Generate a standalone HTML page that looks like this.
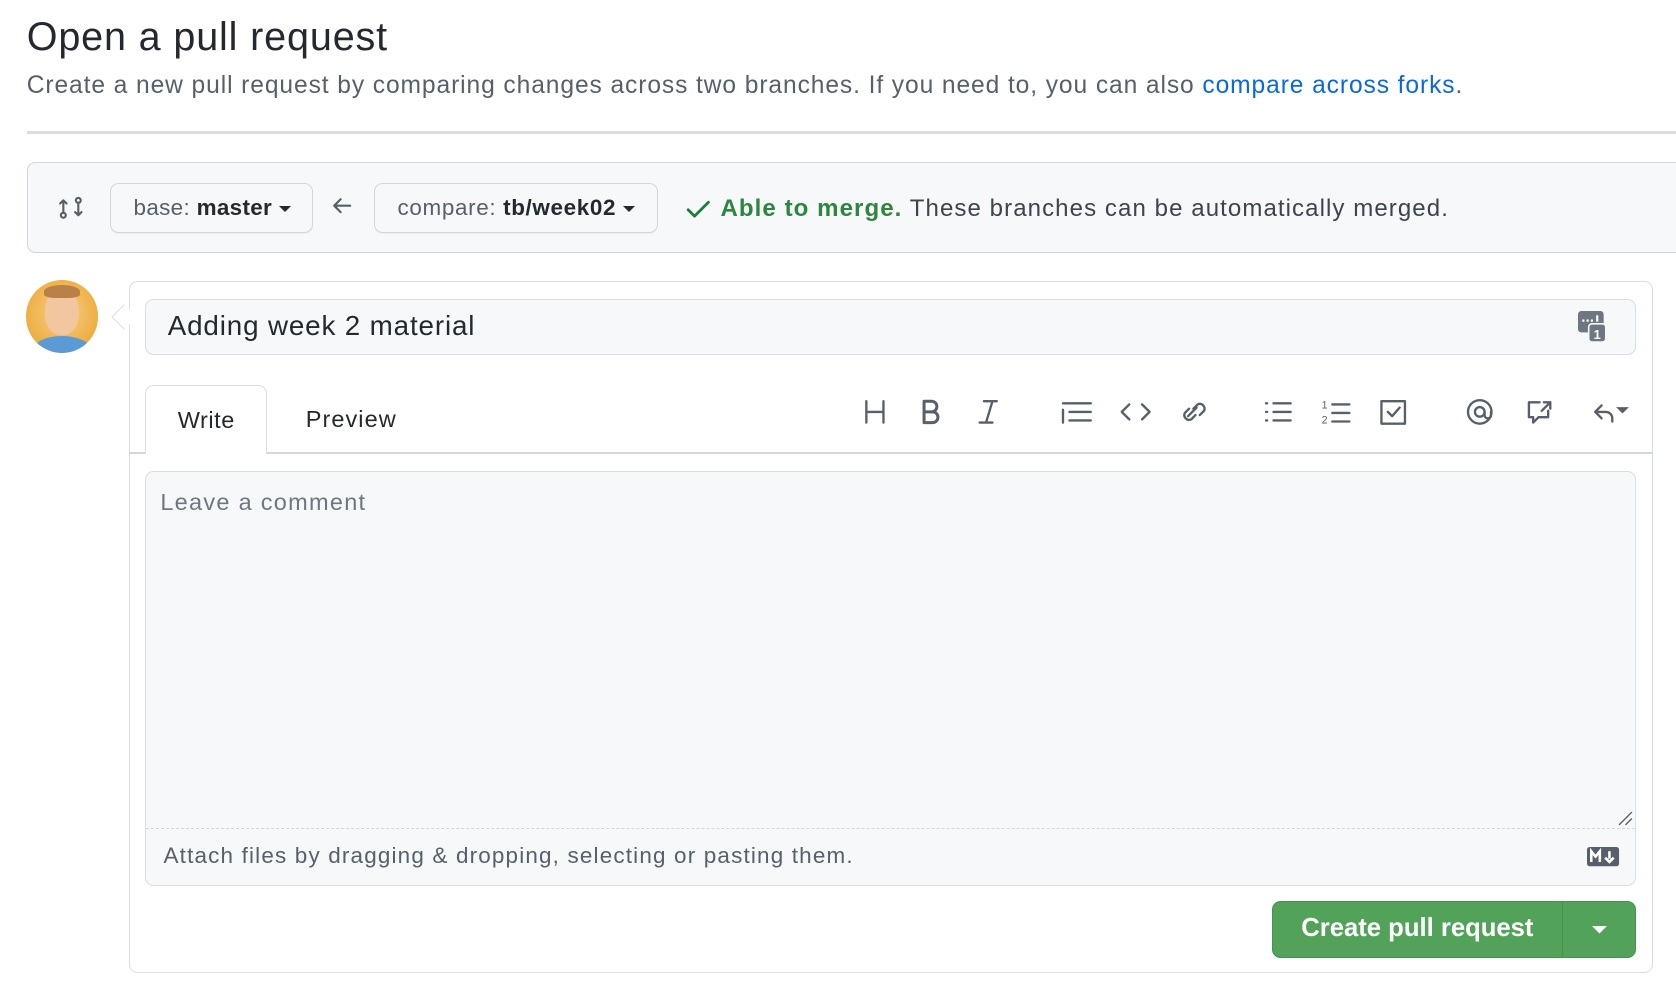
<!DOCTYPE html>
<html><head><meta charset="utf-8"><style>
html,body{margin:0;padding:0;background:#fff;overflow:hidden;width:1676px;height:996px}
#w{zoom:1.0689;position:relative;width:1568px;height:932px;font-family:"Liberation Sans",sans-serif;color:#24292f}
.a{position:absolute}
svg{position:absolute;overflow:visible}
.btn{position:absolute;background:#f6f8fa;border:1.5px solid #d0d7de;border-radius:8px;box-sizing:border-box;font-size:21px;color:#57606a;line-height:44px;padding-left:21px;box-shadow:0 1px 0 rgba(27,31,36,.04);letter-spacing:0.3px}
.btn b{color:#24292f;font-weight:600}
.car{display:inline-block;width:0;height:0;border-left:6px solid transparent;border-right:6px solid transparent;border-top:6px solid #24292f;vertical-align:middle;margin-left:6px}
</style></head><body><div id="w">
<div class="a" style="left:25px;top:12px;font-size:37px;line-height:46px;letter-spacing:0.8px">Open a pull request</div>
<div class="a" style="left:25px;top:66px;font-size:23px;line-height:28px;color:#57606a;letter-spacing:0.85px;white-space:nowrap">Create a new pull request by comparing changes across two branches. If you need to, you can also <span style="color:#0969da">compare across forks</span>.</div>
<div class="a" style="left:25px;top:123px;width:1543px;height:2px;background:#d8dee4"></div>

<div class="a" style="left:25px;top:152px;width:1560px;height:85px;box-sizing:border-box;background:#f6f8fa;border:1.5px solid #d0d7de;border-radius:8px"></div>
<svg style="left:54px;top:182px" width="24" height="24" viewBox="0 0 24 24" fill="none" stroke="#57606a" stroke-width="2" stroke-linecap="round" stroke-linejoin="round"><circle cx="5" cy="19" r="2.3"/><circle cx="19" cy="5" r="2.3"/><path d="M5 16.7V5M2 8l3-3M19 7.3V19M16 16l3 3M5 5l3 3M19 19l3-3"/></svg>
<div class="btn" style="left:103px;top:171px;width:190px;height:47px">base: <b>master</b><span class="car"></span></div>
<svg style="left:310px;top:182px" width="22" height="22" viewBox="0 0 22 22" fill="none" stroke="#57606a" stroke-width="2" stroke-linecap="round" stroke-linejoin="round"><path d="M18 10H3M9 4L3 10l6 6"/></svg>
<div class="btn" style="left:350px;top:171px;width:266px;height:47px;letter-spacing:0.6px">compare: <b>tb/week02</b><span class="car"></span></div>
<svg style="left:642px;top:185px" width="24" height="22" viewBox="0 0 24 22" fill="none" stroke="#1a7f37" stroke-width="2.6" stroke-linecap="round" stroke-linejoin="round"><path d="M2 11l6 6L21 4"/></svg>
<div class="a" style="left:674px;top:181px;font-size:22.5px;line-height:30px;color:#3d444d;letter-spacing:1px;white-space:nowrap"><b style="color:#2e8540;font-weight:700">Able to merge.</b> These branches can be automatically merged.</div>

<div class="a" style="left:24px;top:262px;width:68px;height:68px;border-radius:50%;background:radial-gradient(circle at 50% 45%,#f5d08a 0,#f0b24a 60%,#e89a30 100%);overflow:hidden">
<div class="a" style="left:18px;top:9px;width:32px;height:42px;border-radius:45%;background:#f2c7a0"></div>
<div class="a" style="left:17px;top:5px;width:34px;height:12px;border-radius:50% 50% 30% 30%;background:#b9804a"></div>
<div class="a" style="left:8px;top:52px;width:52px;height:24px;border-radius:50% 50% 0 0;background:#5b9bd5"></div>
</div>

<div class="a" style="left:121px;top:263px;width:1425px;height:647px;box-sizing:border-box;border:1.5px solid #d8dee4;border-radius:8px;background:#fff"></div>
<div class="a" style="left:108px;top:288px;width:16px;height:16px;background:#fff;border-left:1.5px solid #d8dee4;border-bottom:1.5px solid #d8dee4;transform:rotate(45deg)"></div>
<div class="a" style="left:136px;top:280px;width:1395px;height:52px;box-sizing:border-box;background:#f6f8fa;border:1.5px solid #d8dee4;border-radius:8px;font-size:26px;line-height:49px;padding-left:20px;letter-spacing:0.8px">Adding week 2 material</div>
<svg style="left:1476px;top:291px" width="27" height="30" viewBox="0 0 27 30"><rect x="0" y="0" width="24" height="20" rx="3" fill="#6e7781"/><rect x="10" y="12" width="16" height="17" rx="3" fill="#6e7781" stroke="#f6f8fa" stroke-width="1.5"/><text x="18" y="26" font-size="12" font-weight="bold" fill="#fff" text-anchor="middle" font-family="Liberation Sans">1</text><path d="M4 9h2M8 9h2M12 9h2" stroke="#fff" stroke-width="2"/><path d="M18 4v6" stroke="#fff" stroke-width="2"/></svg>

<div class="a" style="left:121px;top:423px;width:1425px;height:1.5px;background:#d0d7de"></div>
<div class="a" style="left:136px;top:360px;width:114px;height:65px;box-sizing:border-box;background:#fff;border:1.5px solid #d8dee4;border-bottom:none;border-radius:8px 8px 0 0;font-size:22px;line-height:64px;text-align:center;letter-spacing:0.5px">Write</div>
<div class="a" style="left:286px;top:360px;font-size:22px;line-height:64px;letter-spacing:1px">Preview</div>

<svg style="left:806px;top:372px" width="720" height="28" viewBox="0 0 720 28" fill="none" stroke="#57606a" stroke-width="2.2" stroke-linecap="round" stroke-linejoin="round">
<path d="M4 3v20M20 3v20M4 13h16"/>
<path d="M58 3v20h8a5 5 0 000-10h-8M58 13h7a5 5 0 000-10h-7" stroke-width="2.8"/>
<path d="M114 3h12M110 23h12M122 3l-6 20"/>
<path d="M188 5h26M194 13h20M194 21h20M188 11v12"/>
<path d="M250 6l-7 7 7 7M262 6l7 7-7 7"/>
<path d="M306 10l-4 4a4.5 4.5 0 006 6l4-4M316 16l4-4a4.5 4.5 0 00-6-6l-4 4M305 17l8-8"/>
<path d="M378 5h1M378 13h1M378 21h1M385 5h16M385 13h16M385 21h16"/>
<path d="M440 6h16M440 14h16M440 22h16"/>
<path d="M486 3h22v21h-22zM492 13l4 4 7-8"/>
<circle cx="578" cy="13" r="11"/><circle cx="578" cy="13" r="4.5"/><path d="M582.5 13v3a3 3 0 006 0v-3"/>
<path d="M634 4h-10v14h4v5l5-5h9v-6M638 4h6v6M644 4l-8 8"/>
<path d="M686 13l6-6M686 13l6 6M686 13h10a6 6 0 016 6v3"/>
<text x="430" y="10" font-size="10" fill="#57606a" stroke="none" font-family="Liberation Sans">1</text>
<text x="430" y="24" font-size="10" fill="#57606a" stroke="none" font-family="Liberation Sans">2</text>
</svg>
<svg style="left:1511px;top:380px" width="14" height="8" viewBox="0 0 14 8"><path d="M1 1h12L7 7z" fill="#57606a"/></svg>

<div class="a" style="left:136px;top:441px;width:1395px;height:388px;box-sizing:border-box;background:#f6f8fa;border:1.5px solid #d8dee4;border-radius:8px"></div>
<div class="a" style="left:150px;top:457px;font-size:22px;line-height:28px;color:#6e7781;letter-spacing:1.2px">Leave a comment</div>
<div class="a" style="left:137px;top:775px;width:1393px;border-top:1.5px dashed #d0d7de"></div>
<svg style="left:1514px;top:759px" width="14" height="14" viewBox="0 0 14 14" stroke="#57606a" stroke-width="1.3"><path d="M1 13L13 1M7 13l6-6"/></svg>
<div class="a" style="left:153px;top:788px;font-size:21px;line-height:26px;color:#57606a;letter-spacing:1.1px;white-space:nowrap">Attach files by dragging &amp; dropping, selecting or pasting them.</div>
<svg style="left:1485px;top:792px" width="30" height="18" viewBox="0 0 30 18"><rect width="30" height="18" rx="2.5" fill="#57606a"/><path d="M4 14V4l4 5 4-5v10" stroke="#fff" stroke-width="2.4" fill="none"/><path d="M21 4v7M17 10l4 4 4-4" stroke="#fff" stroke-width="2.4" fill="none"/></svg>

<div class="a" style="left:1190px;top:843px;width:341px;height:53px;box-sizing:border-box;background:#52a25a;border:1.5px solid #47914f;border-radius:8px"></div>
<div class="a" style="left:1190px;top:843px;width:272px;height:53px;text-align:center;color:#fff;font-size:24px;font-weight:600;line-height:51px">Create pull request</div>
<div class="a" style="left:1461px;top:844px;width:1.5px;height:51px;background:#47914f"></div>
<svg style="left:1489px;top:866px" width="14" height="8" viewBox="0 0 14 8"><path d="M0 0h14L7 7z" fill="#fff"/></svg>
</div></body></html>
